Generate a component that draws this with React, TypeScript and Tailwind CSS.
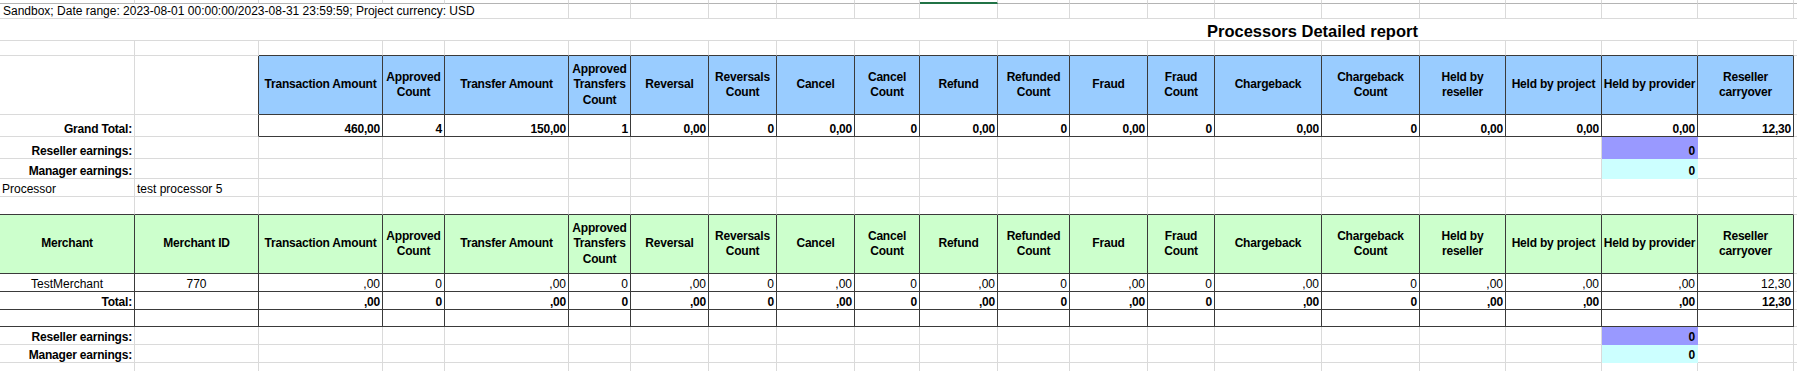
import clsx from "clsx";

// column widths A..T, measured off the sheet (border included)
const W = [
  "w-[135px]", "w-[124px]", "w-[124px]", "w-[62px]", "w-[124px]", "w-[62px]", "w-[78px]",
  "w-[68px]", "w-[78px]", "w-[65px]", "w-[78px]", "w-[72px]", "w-[78px]", "w-[67px]",
  "w-[107px]", "w-[98px]", "w-[86px]", "w-[96px]", "w-[96px]", "w-[96px]",
];

const LR = "border-r-[#dadada]";
const DR = "border-r-[#3a3a3a]";
const LB = "border-b-[#dadada]";
const DB = "border-b-[#3a3a3a]";

const HEAD = [
  ["Transaction Amount"], ["Approved", "Count"], ["Transfer Amount"], ["Approved", "Transfers", "Count"],
  ["Reversal"], ["Reversals", "Count"], ["Cancel"], ["Cancel", "Count"], ["Refund"], ["Refunded", "Count"],
  ["Fraud"], ["Fraud", "Count"], ["Chargeback"], ["Chargeback", "Count"], ["Held by", "reseller"],
  ["Held by project"], ["Held by provider"], ["Reseller", "carryover"],
];

const GRAND = ["460,00", "4", "150,00", "1", "0,00", "0", "0,00", "0", "0,00", "0", "0,00", "0", "0,00", "0", "0,00", "0,00", "0,00", "12,30"];
const MERCH = [",00", "0", ",00", "0", ",00", "0", ",00", "0", ",00", "0", ",00", "0", ",00", "0", ",00", ",00", ",00", "12,30"];

type C = {
  t?: string;
  lines?: string[];
  a?: "l" | "r" | "c";
  b?: boolean;
  fill?: string;
  rc?: string;
  bc?: string;
};

const DARK: C = { rc: DR, bc: DB };

function make(fn: (i: number) => C): C[] {
  return Array.from({ length: 20 }, (_, i) => fn(i));
}

function Cell({ w, c }: { w: string; c: C }) {
  const head = !!c.lines;
  return (
    <div
      className={clsx(
        "flex h-full shrink-0 overflow-hidden border-r border-b",
        w,
        c.rc ?? LR,
        c.bc ?? LB,
        c.fill,
        head
          ? "flex-col items-center justify-center text-center leading-[15.5px]"
          : "items-end whitespace-nowrap leading-[13px]",
        !head &&
          (c.a === "l" ? "justify-start pl-[2px]" : c.a === "c" ? "justify-center" : "justify-end pr-[2px]"),
        c.b && "font-bold tracking-[-0.2px]"
      )}
    >
      {head
        ? c.lines!.map((l) => (
            <span key={l} className="whitespace-nowrap">
              {l}
            </span>
          ))
        : c.t}
    </div>
  );
}

function Row({ h, cells }: { h: string; cells: C[] }) {
  return (
    <div className={clsx("flex", h)}>
      {cells.map((c, i) => (
        <Cell key={i} w={W[i]} c={c} />
      ))}
      <div className={clsx("h-full flex-1 border-b", LB)} />
    </div>
  );
}

function earnings(label: string, fill: string, edge: string, edgeB: string) {
  return make((i) =>
    i === 0
      ? { t: label, b: true }
      : i === 18
      ? { t: "0", b: true, fill, rc: edge, bc: edgeB }
      : {}
  );
}

export default function App() {
  const blueHead = make((i) =>
    i === 1 ? { rc: DR } : i >= 2 ? { lines: HEAD[i - 2], b: true, fill: "bg-[#99ccff]", ...DARK } : {}
  );
  const grand = make((i) =>
    i === 0 ? { t: "Grand Total:", b: true } : i === 1 ? { rc: DR } : { t: GRAND[i - 2], b: true, ...DARK }
  );
  const greenHead = make((i) => ({
    lines: i === 0 ? ["Merchant"] : i === 1 ? ["Merchant ID"] : HEAD[i - 2],
    b: true,
    fill: "bg-[#ccffcc]",
    ...DARK,
  }));
  const merchant = make((i) =>
    i === 0
      ? { t: "TestMerchant", a: "c", ...DARK }
      : i === 1
      ? { t: "770", a: "c", ...DARK }
      : { t: MERCH[i - 2], ...DARK }
  );
  const total = make((i) =>
    i === 0 ? { t: "Total:", b: true, ...DARK } : i === 1 ? { ...DARK } : { t: MERCH[i - 2], b: true, ...DARK }
  );

  return (
    <div className="h-[371px] w-[1797px] overflow-hidden bg-white font-['Liberation_Sans',Arial,sans-serif] text-[12px] text-black">
      {/* strip under the column headers */}
      <div className="flex h-[4px]">
        {W.map((w, i) => (
          <div
            key={i}
            className={clsx(
              "h-full shrink-0 border-r",
              w,
              LR,
              i === 10 ? "border-b-2 border-b-[#217346]" : "border-b border-b-[#b4b4b4]"
            )}
          />
        ))}
        <div className="h-full flex-1 border-b border-b-[#b4b4b4]" />
      </div>

      <div className="flex h-[15px]">
        <div className={clsx("flex h-full w-[569px] shrink-0 items-end whitespace-nowrap border-r border-b pl-[3px] leading-[13px]", LR, LB)}>
          Sandbox; Date range: 2023-08-01 00:00:00/2023-08-31 23:59:59; Project currency: USD
        </div>
        {W.slice(5).map((w, i) => (
          <div key={i} className={clsx("h-full shrink-0 border-r border-b", w, LR, LB)} />
        ))}
        <div className={clsx("h-full flex-1 border-b", LB)} />
      </div>

      <div className={clsx("flex h-[22px] items-end border-b pl-[1207px]", LB)}>
        <span className="whitespace-nowrap text-[16.5px] font-bold leading-[18px]">Processors Detailed report</span>
      </div>

      <Row h="h-[15px]" cells={make((i) => (i >= 2 ? { bc: DB } : {}))} />
      <Row h="h-[59px]" cells={blueHead} />
      <Row h="h-[22px]" cells={grand} />
      <Row h="h-[22px]" cells={earnings("Reseller earnings:", "bg-[#9999ff]", "border-r-[#9999ff]", "border-b-[#9999ff]")} />
      <Row h="h-[20px]" cells={earnings("Manager earnings:", "bg-[#ccffff]", "border-r-[#ccffff]", "border-b-[#ccffff]")} />
      <Row
        h="h-[18px]"
        cells={make((i) =>
          i === 0 ? { t: "Processor", a: "l" } : i === 1 ? { t: "test processor 5", a: "l" } : {}
        )}
      />
      <Row h="h-[18px]" cells={make(() => ({ bc: DB }))} />
      <Row h="h-[59px]" cells={greenHead} />
      <Row h="h-[18px]" cells={merchant} />
      <Row h="h-[18px]" cells={total} />
      <Row h="h-[17px]" cells={make(() => ({ ...DARK }))} />
      <Row h="h-[18px]" cells={earnings("Reseller earnings:", "bg-[#9999ff]", "border-r-[#9999ff]", "border-b-[#9999ff]")} />
      <Row h="h-[18px]" cells={earnings("Manager earnings:", "bg-[#ccffff]", "border-r-[#ccffff]", "border-b-[#ccffff]")} />
      <Row h="h-[20px]" cells={make(() => ({}))} />
    </div>
  );
}
